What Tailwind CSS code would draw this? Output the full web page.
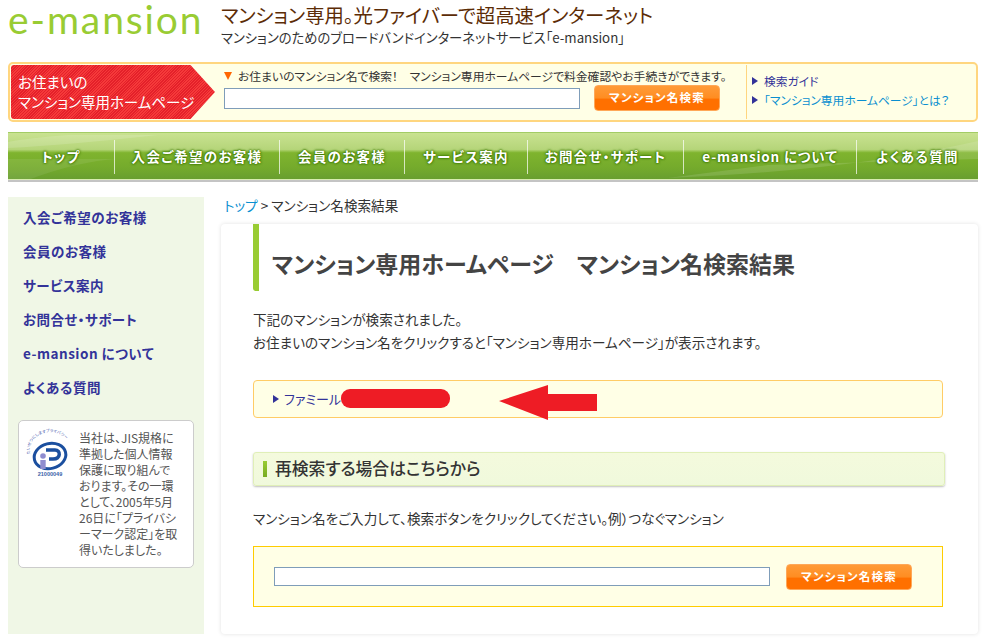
<!DOCTYPE html>
<html lang="ja">
<head>
  <meta charset="UTF-8" />
  <meta name="viewport" content="width=device-width, initial-scale=1.0"/>
  <title>マンション名検索結果 - e-mansion</title>
  <script src="https://cdn.jsdelivr.net/npm/@tailwindcss/browser@4"></script>
</head>
<body class="bg-white h-[641px] overflow-hidden font-['Noto_Sans_CJK_JP','Noto_Sans',sans-serif] [font-feature-settings:'palt'] text-[#333]">
  <div class="w-[970px] ml-2">

    <!-- header -->
    <header class="h-[62px] flex">
      <div class="w-[213px] h-[38px] font-['Lato','Noto_Sans',sans-serif] text-[39px] leading-[38px] text-[#99cc33] tracking-[1.9px]">e-mansion</div>
      <div class="pt-[3px]">
        <p class="text-[19.4px] leading-[24px] text-[#5c2c06]">マンション専用。光ファイバーで超高速インターネット</p>
        <p class="mt-[1px] text-[13.3px] leading-[20px] text-[#333]">マンションのためのブロードバンドインターネットサービス「e-mansion」</p>
      </div>
    </header>

    <!-- search bar -->
    <div class="h-[60px] border-2 border-[#ffd67f] rounded-[5px] bg-[#ffffe6] flex items-stretch pl-[1px] py-[1px]">
      <div class="w-[204px] pl-[7px] flex flex-col justify-center text-white text-[14.5px] leading-[20px] rounded-l-[3px] [clip-path:polygon(0_0,88%_0,100%_50%,88%_100%,0_100%)] bg-[repeating-linear-gradient(135deg,#e4202a_0,#e4202a_1px,#f53a3a_1px,#f53a3a_2px)]">
        <span>お住まいの</span>
        <span>マンション専用ホームページ</span>
      </div>
      <div class="w-[531px] pl-[9px]">
        <p class="flex items-center text-[11.8px] leading-[16px] h-[16px] mt-[3px] text-[#333]">
          <span class="w-0 h-0 mr-[6px] border-l-[4px] border-r-[4px] border-t-[8px] border-l-transparent border-r-transparent border-t-[#ff6600]"></span>
          お住まいのマンション名で検索！　マンション専用ホームページで料金確認やお手続きができます。
        </p>
        <div class="flex items-center mt-[1px]">
          <input type="text" class="w-[356px] h-[21px] bg-white border border-[#7f9db9]" />
          <button class="ml-[14px] w-[126px] h-[26px] rounded-[4px] border border-[#ffa858] bg-[linear-gradient(#ff9b38_0,#ff8d22_50%,#ff7000_55%,#ff7000_100%)] text-white text-[11.5px] font-bold tracking-[1.2px]">マンション名検索</button>
        </div>
      </div>
      <div class="flex-1 border-l border-[#ffd67f] pl-[5px] text-[11.75px] leading-[19px] pt-[6px]">
        <a class="flex items-center text-[#333399]"><span class="w-0 h-0 mr-[6px] border-y-[4px] border-l-[6px] border-y-transparent border-l-[#333399]"></span>検索ガイド</a>
        <a class="flex items-center text-[#0a8fd0]"><span class="w-0 h-0 mr-[6px] border-y-[4px] border-l-[6px] border-y-transparent border-l-[#333399]"></span>「マンション専用ホームページ」とは？</a>
      </div>
    </div>

    <!-- global nav -->
    <nav class="relative mt-[10px] h-[50px] border-t border-[#a3cc66] border-b-2 border-b-[#c4c4c4] bg-[linear-gradient(#c9e291_0,#b5d579_35%,#7fb42e_42%,#74aa2c_75%,#679d2f_100%)] flex items-center overflow-hidden text-white text-[13.5px] font-bold tracking-[1.3px] [text-shadow:0_0_2px_#3f7a00,0_0_2px_#3f7a00,0_0_3px_#3f7a00]">
      <svg class="absolute inset-0" width="970" height="47" viewBox="0 0 970 47" fill="none">
        <path d="M0 15 Q60 12 150 2 L60 2 Q20 5 0 9Z" fill="#fff" fill-opacity=".14"/>
        <path d="M20 47 Q70 28 110 26 L0 26 L0 47Z" fill="#fff" fill-opacity=".08"/>
        <path d="M660 45 Q840 38 970 8 L970 26 L760 32Z" fill="#fff" fill-opacity=".12"/>
      </svg>
      <div class="absolute left-0 right-0 bottom-0 h-[1px] bg-[#d8ecb0]"></div>
      <a class="relative w-[106px] text-center">トップ</a>
      <a class="relative w-[165px] h-[34px] flex items-center justify-center border-l border-white/70">入会ご希望のお客様</a>
      <a class="relative w-[125px] h-[34px] flex items-center justify-center border-l border-white/70">会員のお客様</a>
      <a class="relative w-[123px] h-[34px] flex items-center justify-center border-l border-white/70">サービス案内</a>
      <a class="relative w-[156px] h-[34px] flex items-center justify-center border-l border-white/70">お問合せ・サポート</a>
      <a class="relative w-[173px] h-[34px] flex items-center justify-center border-l border-white/70 tracking-[.8px]">e-mansion について</a>
      <a class="relative w-[122px] h-[34px] flex items-center justify-center border-l border-white/70">よくある質問</a>
    </nav>

    <div class="flex mt-[15px]">
      <!-- side menu -->
      <aside class="w-[196px] h-[437px] bg-[#f0f7e6] px-[10px] pt-[3px] shrink-0">
        <ul class="pl-[5px] text-[13.5px] font-bold text-[#333399] tracking-[.5px]">
          <li class="h-[34px] leading-[34px]">入会ご希望のお客様</li>
          <li class="h-[34px] leading-[34px]">会員のお客様</li>
          <li class="h-[34px] leading-[34px]">サービス案内</li>
          <li class="h-[34px] leading-[34px]">お問合せ・サポート</li>
          <li class="h-[34px] leading-[34px]">e-mansion について</li>
          <li class="h-[34px] leading-[34px]">よくある質問</li>
        </ul>
        <div class="mt-[16px] h-[148px] bg-white border border-[#ccc] rounded-[5px] flex pt-[9px]">
          <svg class="ml-[10px] mt-[5px] shrink-0 overflow-visible" width="43" height="42" viewBox="0 0 43 42" fill="none">
            <defs><path id="arc" d="M1 19 A20 18 0 0 1 41 12"/></defs>
            <text font-size="4" fill="#3a4fa8" font-family="Noto Sans CJK JP"><textPath href="#arc">たいせつにしますプライバシー</textPath></text>
            <ellipse cx="21" cy="21" rx="16" ry="12.5" transform="rotate(-14 21 21)" stroke="#1b4f9f" stroke-width="3"/>
            <path d="M17 15 H26 C32 15 32 24 24 24 H20" stroke="#1b4f9f" stroke-width="3.5"/>
            <circle cx="14" cy="21" r="2.8" fill="#8f8dcf"/>
            <rect x="11.3" y="25" width="5.4" height="9" fill="#8f8dcf"/>
            <text x="21" y="41" text-anchor="middle" font-size="5.5" font-weight="700" fill="#3a5fa8" font-family="Liberation Sans">21000049</text>
          </svg>
          <p class="ml-[7px] text-[12px] leading-[16px] text-[#555]">当社は、JIS規格に<br>準拠した個人情報<br>保護に取り組んで<br>おります。その一環<br>として、2005年5月<br>26日に「プライバシ<br>ーマーク認定」を取<br>得いたしました。</p>
        </div>
      </aside>

      <!-- main -->
      <div class="ml-[17px] flex-1 min-w-0">
        <p class="h-[27px] pl-[3px] text-[13.6px] leading-[17px] text-[#333]"><a class="text-[#0a8fd0]">トップ</a> &gt; マンション名検索結果</p>
        <main class="relative h-[410px] bg-white rounded-[4px] shadow-[0_0_4px_rgba(0,0,0,0.12)] px-[32px]">
          <h1 class="w-[690px] h-[67px] border-l-[6px] border-[#99cc33] rounded-bl-[3px] pl-[13px] pt-[22px] text-[23px] leading-[34px] font-bold text-[#444]">マンション専用ホームページ　マンション名検索結果</h1>
          <p class="mt-[17px] text-[13.6px] leading-[23px]">下記のマンションが検索されました。<br>お住まいのマンション名をクリックすると「マンション専用ホームページ」が表示されます。</p>

          <div class="relative mt-[26px] w-[690px] h-[38px] border border-[#ffcc66] rounded-[4px] bg-[#ffffe6] flex items-center pl-[19px] text-[13px] text-[#333399]">
            <span class="w-0 h-0 mr-[5px] border-y-[4px] border-l-[6px] border-y-transparent border-l-[#333399]"></span>ファミール
            <span class="absolute left-[87px] top-[8px] w-[109px] h-[19px] rounded-[9px] bg-[#ee1c25]"></span>
            <svg class="absolute left-[245px] top-[4px]" width="98" height="35" viewBox="0 0 98 35"><path d="M0 16 L49 0 V9 H98 V26 H49 V35Z" fill="#ee1c25"/></svg>
          </div>

          <h2 class="mt-[34px] w-[692px] h-[34px] border border-[#e0efb8] rounded-[3px] bg-[linear-gradient(#f4fadd,#f0f9dc)] shadow-[0_1px_2px_rgba(0,0,0,0.25)] flex items-center pl-[9px] text-[16.8px] font-medium text-[#333]">
            <span class="w-[4px] h-[16px] mr-[8px] bg-[linear-gradient(#99cc33,#77aa22)]"></span>再検索する場合はこちらから
          </h2>

          <p class="mt-[22px] text-[13.6px] leading-[20px]">マンション名をご入力して、検索ボタンをクリックしてください。例）つなぐマンション</p>

          <div class="mt-[18px] w-[690px] h-[61px] border border-[#ffcc00] bg-[#ffffe6] flex items-center pl-[20px]">
            <input type="text" class="w-[496px] h-[19px] bg-white border border-[#7f9db9]" />
            <button class="ml-[16px] w-[126px] h-[26px] rounded-[4px] border border-[#ffa858] bg-[linear-gradient(#ff9b38_0,#ff8d22_50%,#ff7000_55%,#ff7000_100%)] text-white text-[11.5px] font-bold tracking-[1.2px]">マンション名検索</button>
          </div>
        </main>
      </div>
    </div>
  </div>
</body>
</html>
